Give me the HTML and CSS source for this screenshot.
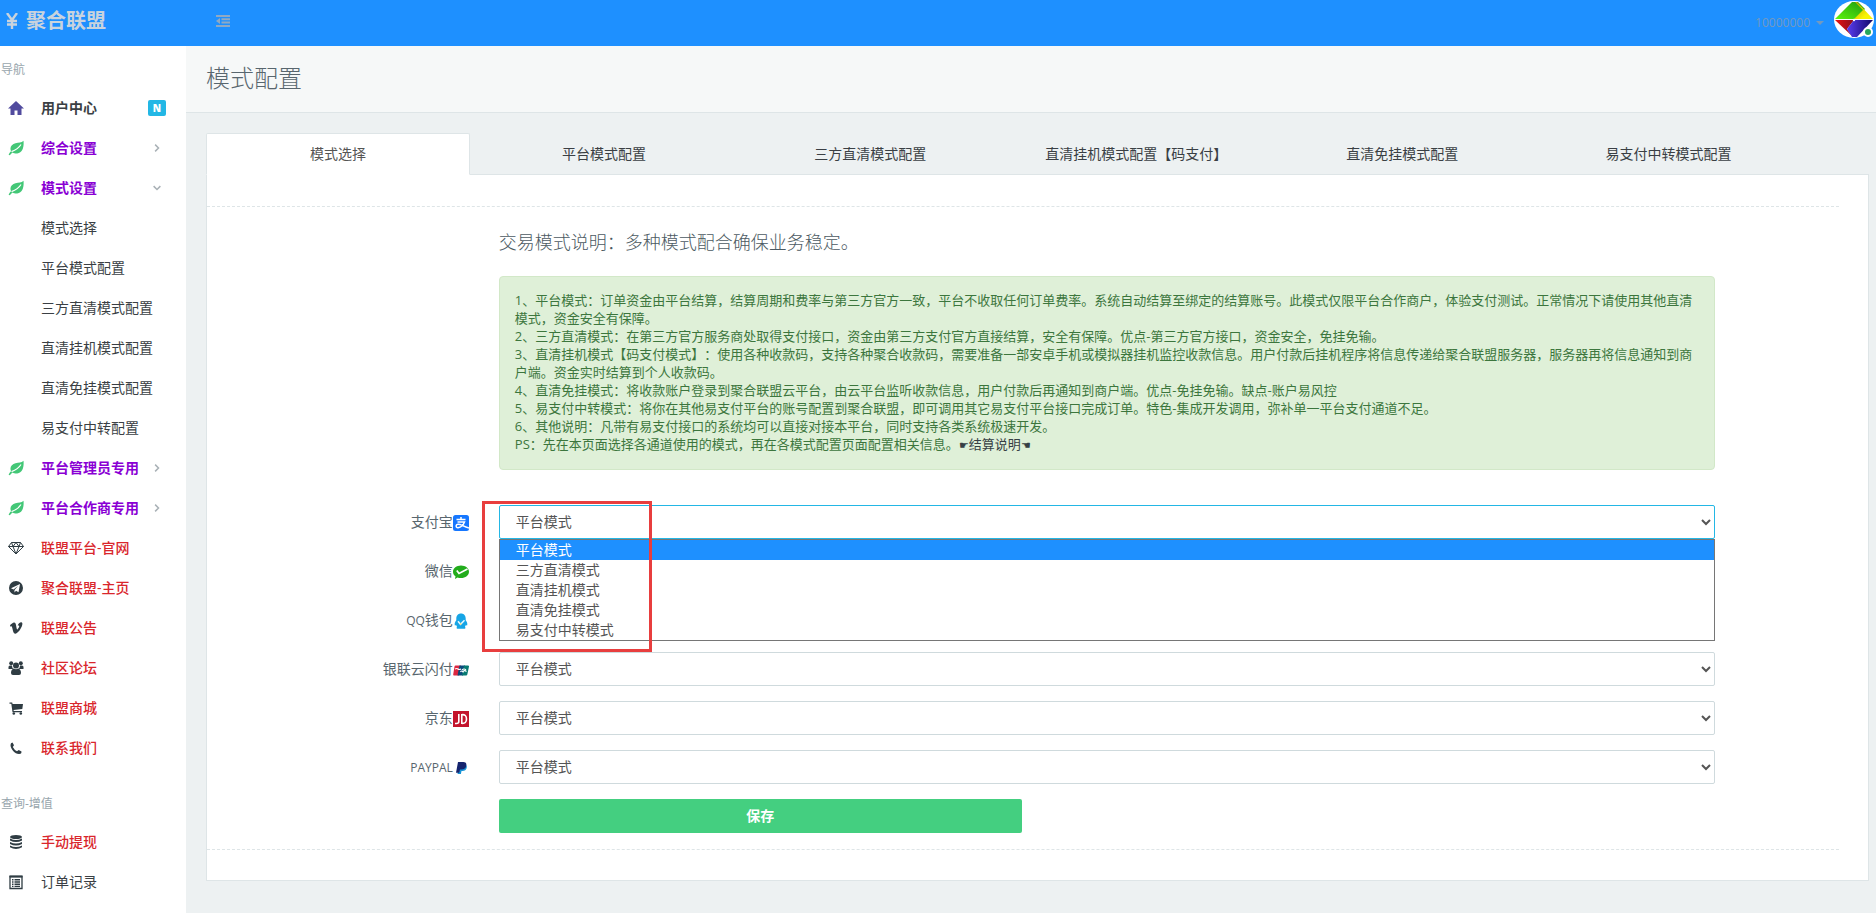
FILE: index.html
```html
<!DOCTYPE html>
<html lang="zh-CN">
<head>
<meta charset="utf-8">
<title>模式配置</title>
<link rel="stylesheet" href="styles.css">
</head>
<body>
<svg class="defs" aria-hidden="true">
  <symbol id="leaf" viewBox="0 0 16 16"><path d="M15.500.8c.6 5.500-.6 12.200-6.300 12.600-2 .1-3.500-.4-4.700-1-.9.700-1.700 1.800-2.700 2.900L.6 14.700c.7-1.600 1.400-2.600 2.400-3.500C1.300 7 3.800 4 7.500 3.200c3-.6 6-.3 8-2.400z"/><path d="M3.500 11.600C6.500 10.500 10.500 8.500 13 4.500" fill="none" stroke="#fff" stroke-width="1.200"/></symbol>
  <symbol id="right" viewBox="0 0 16 16"><path d="M5.500 3.500 10 8l-4.500 4.500" fill="none" stroke="currentColor" stroke-width="2"/></symbol>
  <symbol id="down" viewBox="0 0 16 16"><path d="M3.500 5.500 8 10l4.500-4.500" fill="none" stroke="currentColor" stroke-width="2"/></symbol>
</svg>
<header class="topbar">
  <a class="brand" href="#">
    <svg class="yen" viewBox="0 0 12 16"><path d="M1 0l5 7 5-7M6 7v9M1 8h10M1 11.500h10" fill="none" stroke="currentColor" stroke-width="2.400"/></svg>
    <span>聚合联盟</span>
  </a>
  <button class="toggle" type="button" aria-label="折叠菜单">
    <svg viewBox="0 0 14 12"><path d="M0 1h14M5.500 4.300H14M5.500 7.600H14M0 11h14" fill="none" stroke="currentColor" stroke-width="2"/><path d="M4 3v6L0 6z"/></svg>
  </button>
  <button class="user" type="button">
    <span>10000000</span><span class="caret"></span>
    <span class="avatar">
      <svg viewBox="0 0 40 38">
        <defs>
          <linearGradient id="g1" x1="0" y1="1" x2="1" y2="0"><stop offset="0" stop-color="#5cf60a"/><stop offset="1" stop-color="#1f9a12"/></linearGradient>
          <linearGradient id="g2" x1="0" y1="0" x2="1" y2="1"><stop offset="0" stop-color="#b8a000"/><stop offset=".7" stop-color="#f8f400"/></linearGradient>
          <linearGradient id="g3"><stop offset="0" stop-color="#e81010"/><stop offset="1" stop-color="#8a1020"/></linearGradient>
          <linearGradient id="g4"><stop offset="0" stop-color="#5a3cf0"/><stop offset="1" stop-color="#100868"/></linearGradient>
        </defs>
        <ellipse cx="20" cy="19.500" rx="20" ry="18.500" fill="#fff"/>
        <path d="M1 19 18 2h6l7 7-10 10z" fill="url(#g1)"/><path d="M23 2l16 17H20l9-9-8-8z" fill="url(#g2)"/>
        <path d="M1 20h19l-7 9 5 7z" fill="url(#g3)"/><path d="M20 20h19L23 37h-5l-5-8z" fill="url(#g4)"/><circle cx="20" cy="20" r="1.200" fill="#fff"/>
      </svg>
      <i class="online"></i>
    </span>
  </button>
</header>
<div class="shell">
  <nav class="side">
    <h2 class="side-title">导航</h2>
    <ul class="menu">
      <li><a class="home" href="#"><svg class="ico indigo" viewBox="0 0 16 16"><path d="M8 1 0 8.500h2.500V15h4v-4.500h3V15h4V8.500H16z"/></svg><span>用户中心</span><b class="badge">N</b></a></li>
      <li><a class="purple" href="#"><svg class="ico green"><use href="#leaf"/></svg><span>综合设置</span><svg class="arr"><use href="#right"/></svg></a></li>
      <li><a class="purple" href="#"><svg class="ico green"><use href="#leaf"/></svg><span>模式设置</span><svg class="arr"><use href="#down"/></svg></a>
        <ul class="menu sub">
          <li><a href="#">模式选择</a></li>
          <li><a href="#">平台模式配置</a></li>
          <li><a href="#">三方直清模式配置</a></li>
          <li><a href="#">直清挂机模式配置</a></li>
          <li><a href="#">直清免挂模式配置</a></li>
          <li><a href="#">易支付中转配置</a></li>
        </ul>
      </li>
      <li><a class="purple" href="#"><svg class="ico green"><use href="#leaf"/></svg><span>平台管理员专用</span><svg class="arr"><use href="#right"/></svg></a></li>
      <li><a class="purple" href="#"><svg class="ico green"><use href="#leaf"/></svg><span>平台合作商专用</span><svg class="arr"><use href="#right"/></svg></a></li>
      <li><a class="red" href="#"><svg class="ico" viewBox="0 0 16 16"><path d="M3.500 2.500h9l3 4L8 14 .5 6.500zM.5 6.500h15M5 6.500 8 14l3-7.500M3.500 2.500l1.500 4 3-4 3 4 1.500-4" fill="none" stroke="currentColor"/></svg><span>联盟平台-官网</span></a></li>
      <li><a class="red" href="#"><svg class="ico" viewBox="0 0 16 16"><path fill-rule="evenodd" d="M8 1a7 7 0 1 1 0 14A7 7 0 0 1 8 1zm4 3L3 8.200l2.500 1.200L10 6 6.500 10v2.500L8 10.800l2.500 1.400z"/></svg><span>聚合联盟-主页</span></a></li>
      <li><a class="red" href="#"><svg class="ico" viewBox="0 0 16 16"><path d="M2 5.200C3.200 4 5 2.500 6 2.400c1.300-.1 1.700 1 2 2.600.4 2.200.7 4.400 1.200 4.400.7 0 2.200-2.700 2-3.500-.2-.6-.9-.5-1.500-.2.500-2 2-3.400 3.500-3.400 1.300 0 1.400 1.400 1 2.800-.8 3.500-4.500 8.700-7 8.700-1.800 0-2-2.200-2.600-4.500-.4-1.600-.6-3-1.200-3-.2 0-.6.300-.9.500z"/></svg><span>联盟公告</span></a></li>
      <li><a class="red" href="#"><svg class="ico" viewBox="0 0 16 16"><circle cx="3.200" cy="3.200" r="2"/><circle cx="12.800" cy="3.200" r="2"/><circle cx="8" cy="5.500" r="3"/><path d="M.5 9V7q0-1.500 1.500-1.500h2Q4 8 5.500 9zM15.500 9V7q0-1.500-1.500-1.500h-2Q12 8 10.500 9zM3 13q0-4 3-4.500 2 1.500 4 0 3 .5 3 4.500 0 2-2 2H5q-2 0-2-2z"/></svg><span>社区论坛</span></a></li>
      <li><a class="red" href="#"><svg class="ico" viewBox="0 0 16 16"><path d="M1.500 2.500h2.700l.4 1.500H15l-.7 5-8.800 1 .3 1H14v1.300H4.500L3.300 3.800H1.500z"/><circle cx="5.800" cy="13.500" r="1.300"/><circle cx="12.800" cy="13.500" r="1.300"/></svg><span>联盟商城</span></a></li>
      <li><a class="red" href="#"><svg class="ico" viewBox="0 0 16 16"><path d="M4.500 2.500 6 5.300 4.800 7q1.500 3 4.200 4.200l1.700-1.200 2.800 1.500q.2 2.500-2.300 2.500C7 14.200 2.500 9 2.500 5q0-2.500 2-2.500z"/></svg><span>联系我们</span></a></li>
    </ul>
    <h2 class="side-title second">查询-增值</h2>
    <ul class="menu">
      <li><a class="red" href="#"><svg class="ico" viewBox="0 0 16 16"><ellipse cx="8" cy="3" rx="6" ry="2"/><path d="M2 4.500q6 3 12 0v2q-6 3-12 0zM2 8q6 3 12 0v2q-6 3-12 0zM2 11.500q6 3 12 0v1.800q-6 3.400-12 0z"/></svg><span>手动提现</span></a></li>
      <li><a class="plain" href="#"><svg class="ico" viewBox="0 0 16 16"><path d="M2 2.500h12v12H2z" fill="none" stroke="currentColor" stroke-width="1.300"/><path d="M1.500 1.500h13v2h-13zM4 5h1.500v1.400H4zM6.500 5H12v1.400H6.500zM4 7.300h1.500v1.400H4zM6.500 7.300H12v1.400H6.500zM4 9.600h1.500V11H4zM6.500 9.600H12V11H6.500zM4 11.800h1.500V13H4zM6.500 11.800H12V13H6.500z"/></svg><span>订单记录</span></a></li>
    </ul>
  </nav>
  <main class="main">
    <div class="heading"><h1>模式配置</h1></div>
    <div class="content">
      <ul class="tabs">
        <li><a class="active" href="#">模式选择</a></li>
        <li><a href="#">平台模式配置</a></li>
        <li><a href="#">三方直清模式配置</a></li>
        <li><a href="#">直清挂机模式配置【码支付】</a></li>
        <li><a href="#">直清免挂模式配置</a></li>
        <li><a href="#">易支付中转模式配置</a></li>
      </ul>
      <form class="panel">
        <hr class="dash">
        <div class="row intro">
          <div class="field">
            <h3>交易模式说明：多种模式配合确保业务稳定。</h3>
            <div class="alert">
              1、平台模式：订单资金由平台结算，结算周期和费率与第三方官方一致，平台不收取任何订单费率。系统自动结算至绑定的结算账号。此模式仅限平台合作商户，体验支付测试。正常情况下请使用其他直清模式，资金安全有保障。<br>
              2、三方直清模式：在第三方官方服务商处取得支付接口，资金由第三方支付官方直接结算，安全有保障。优点-第三方官方接口，资金安全，免挂免输。<br>
              3、直清挂机模式【码支付模式】：使用各种收款码，支持各种聚合收款码，需要准备一部安卓手机或模拟器挂机监控收款信息。用户付款后挂机程序将信息传递给聚合联盟服务器，服务器再将信息通知到商户端。资金实时结算到个人收款码。<br>
              4、直清免挂模式：将收款账户登录到聚合联盟云平台，由云平台监听收款信息，用户付款后再通知到商户端。优点-免挂免输。缺点-账户易风控<br>
              5、易支付中转模式：将你在其他易支付平台的账号配置到聚合联盟，即可调用其它易支付平台接口完成订单。特色-集成开发调用，弥补单一平台支付通道不足。<br>
              6、其他说明：凡带有易支付接口的系统均可以直接对接本平台，同时支持各类系统极速开发。<br>
              PS：先在本页面选择各通道使用的模式，再在各模式配置页面配置相关信息。<a href="#"><span class="hand">☛</span>结算说明<span class="hand">☚</span></a>
            </div>
          </div>
        </div>
        <div class="row">
          <label for="alipay">支付宝<svg class="pay" viewBox="0 0 16 16"><rect width="16" height="16" rx="2.500" fill="#1677ff"/><path d="M3.500 4.500h9M8 2v2.500M4.500 7h7Q9.500 12 5 12.800C2.500 12.800 2.500 9.200 5.200 9.200c3 0 5 2.300 10.800 3.800" fill="none" stroke="#fff" stroke-width="1.500"/></svg></label>
          <div class="field open">
            <select id="alipay" class="focus"><option>平台模式</option><option>三方直清模式</option><option>直清挂机模式</option><option>直清免挂模式</option><option>易支付中转模式</option></select>
            <ul class="list">
              <li class="on">平台模式</li>
              <li>三方直清模式</li>
              <li>直清挂机模式</li>
              <li>直清免挂模式</li>
              <li>易支付中转模式</li>
            </ul>
            <div class="mark"></div>
          </div>
        </div>
        <div class="row">
          <label for="wechat">微信<svg class="pay" viewBox="0 0 16 16"><path d="M8 1.500c4.500 0 8 2.800 8 6.200s-3.500 6.300-8 6.300q-2 0-3.500-.6L2 15l.5-2.700C1 11.200 0 9.700 0 7.700c0-3.400 3.500-6.200 8-6.200z" fill="#22ac1c"/><path d="M3.800 6.500 6 9.500 14.500 5" fill="none" stroke="#fff" stroke-width="1.700"/></svg></label>
          <div class="field"><select id="wechat"><option>平台模式</option></select></div>
        </div>
        <div class="row">
          <label for="qq"><span class="latin">QQ</span>钱包<svg class="pay" viewBox="0 0 16 16"><path d="M8 .5c3 0 4.700 2.200 4.700 5v1.700c1.300 1.500 2 3.300 1.500 5-.5.500-1 0-1.300-.5-.2 1-.6 1.500-1 2 1.300 1.500.5 2.100-1 2.100H5.300c-1.700 0-2.400-.8-1.200-2.100-.5-.5-.8-1-1-2-.3.600-.9 1-1.300.5-.5-1.700.2-3.500 1.500-5V5.500c0-2.800 1.700-5 4.700-5z" fill="#16a5e6"/><path d="m5 8.300 2.500 3 4-4" fill="none" stroke="#e8f8ff" stroke-width="1.500"/><path d="M7 10.300 9 11l-1.500.8z" fill="#f5c430"/></svg></label>
          <div class="field"><select id="qq"><option>平台模式</option></select></div>
        </div>
        <div class="row">
          <label for="union">银联云闪付<svg class="pay" viewBox="0 0 16 16"><path d="M2.500 3.500H8l-2 10H1q-1 0-.8-1l1.300-8q.2-1 1-1z" fill="#dc2740"/><path d="M6.500 3.500H12l-2 10H4.500z" fill="#0a4a7c"/><path d="M11 3.500h4q1.200 0 1 1l-1.700 8q-.2 1-1.200 1H9z" fill="#077a72"/><path d="M2 7q2-1 3 0t3 0M7.500 10q1-2 2.500 0 1-2.500 3.500-.5M9 8q2-2 4 0" fill="none" stroke="#fff" stroke-width="1.100"/></svg></label>
          <div class="field"><select id="union"><option>平台模式</option></select></div>
        </div>
        <div class="row">
          <label for="jd">京东<svg class="pay" viewBox="0 0 16 16"><path d="M0 0h16v16H0z" fill="#c3142d"/><path d="M5.800 3v7.500q0 2-2.300 2H2M8.800 3.700v8.600q4.700.5 4.700-4.300t-4.700-4.300z" fill="none" stroke="#fff" stroke-width="1.600"/></svg></label>
          <div class="field"><select id="jd"><option>平台模式</option></select></div>
        </div>
        <div class="row">
          <label for="paypal"><span class="latin">PAYPAL</span><svg class="pay wide" viewBox="0 0 16 16"><path d="M6.500 4.500h6q2 1 1.200 3.500-.9 3-4.200 3h-1l-.6 3H4.500z" fill="#1793d6"/><path d="M5 2h5.500q3.500.3 2.800 3.700Q12.500 9.500 8.500 9.500H7l-.8 3.300H3z" fill="#15246e"/></svg></label>
          <div class="field"><select id="paypal"><option>平台模式</option></select></div>
        </div>
        <div class="row">
          <div class="field save"><button type="button">保存</button></div>
        </div>
        <hr class="dash last">
      </form>
    </div>
  </main>
</div>
</body>
</html>
```
FILE: styles.css
```css
* { box-sizing: border-box; }
body {
  margin: 0;
  min-height: 100vh;
  display: flex;
  flex-direction: column;
  background: #edf1f2;
  color: #58666e;
  font: 14px/20px "Open Sans", "Noto Sans CJK SC", sans-serif;
  text-spacing-trim: space-all;
}
ul { list-style: none; margin: 0; padding: 0; }
h1, h2, h3 { margin: 0; font-weight: 300; }
a { color: inherit; text-decoration: none; }
button, select { font: inherit; }
svg { fill: currentColor; }
.defs { display: none; }

.topbar { display: flex; align-items: center; height: 46px; background: #1e90ff; color: #c9d3dd; }
.brand { display: flex; align-items: center; gap: 8px; width: 186px; padding: 0 0 4px 6px; font-size: 20px; font-weight: 700; }
.yen { width: 12px; height: 16px; }
.toggle, .user { border: 0; padding: 0; background: none; color: #8fa9c4; }
.toggle { margin-left: 30px; padding-bottom: 4px; }
.toggle svg { display: block; width: 14px; height: 12px; }
.user { display: flex; align-items: center; margin-left: auto; padding-right: 2px; font-size: 12px; color: #7399bf; }
.caret { margin: 0 10px 0 6px; border: 4px solid transparent; border-top-color: currentColor; border-bottom: 0; }
.avatar { position: relative; width: 40px; height: 46px; }
.avatar svg { display: block; width: 40px; height: 38px; }
.online { position: absolute; right: 1px; top: 27px; width: 10px; height: 10px; border: 2px solid #fff; border-radius: 50%; background: #27a85a; }

.shell { flex: 1; display: flex; }
.side { width: 186px; padding-top: 14px; background: #fff; }
.side-title { padding: 0 1px 8px; font-size: 12px; font-weight: 400; line-height: 20px; color: #98a6ad; }
.side-title.second { padding-top: 26px; }
.menu a { display: flex; align-items: center; height: 40px; padding: 0 20px 0 8px; color: #3a3f44; }
.menu .ico { width: 16px; height: 16px; margin-right: 17px; color: #2f3c43; }
.menu .ico.green { color: #43c777; }
.menu .ico.indigo { color: #514b9e; }
.menu a.home { font-weight: 700; }
.menu a.purple { font-weight: 700; color: #8a00d4; }
.menu a.red { font-weight: 500; color: #d9262c; }
.menu.sub a { padding-left: 41px; }
.arr { width: 12px; height: 12px; margin: 0 3px 0 auto; color: #a9b1b6; }
.home .badge { margin-left: auto; width: 18px; border-radius: 2px; background: #23b7e5; color: #fff; font-size: 10px; line-height: 16px; text-align: center; }

.main { flex: 1; min-width: 0; }
.heading { padding: 14px 20px 16px; border-bottom: 1px solid #dee5e7; background: #f6f8f8; }
h1 { font-size: 24px; line-height: 36px; color: #58666e; }
.content { padding: 20px 7px 32px 20px; }
.tabs { display: flex; position: relative; margin-bottom: -1px; }
.tabs li { width: 16%; padding-right: 2px; }
.tabs a { display: block; height: 42px; padding: 10px 15px; border: 1px solid transparent; border-radius: 2px 2px 0 0; text-align: center; line-height: 20px; color: #3a3f44; }
.tabs a.active { border-color: #dee5e7; border-bottom-color: #fff; background: #fff; color: #555; }
.panel { padding-bottom: 30px; border: 1px solid #dee5e7; background: #fff; }
.dash { margin: 31px 29px 23px 0; border: 0; border-top: 1px dashed #dee5e7; }
.dash.last { margin: 16px 29px 0 0; }
.row { display: grid; grid-template-columns: 2fr 9fr 1fr; margin-bottom: 15px; }
.row label { padding: 7px 15px 0; text-align: right; }
.latin { font-size: 12px; }
.pay { width: 16px; height: 16px; vertical-align: -4px; }
.field { grid-column: 2; min-width: 0; padding: 0 15px; }
.row.intro { margin-bottom: 35px; }
h3 { margin-bottom: 22px; font-size: 18px; line-height: 24px; color: #4c5a62; }
.alert { padding: 14px 15px 16px; border: 1px solid #d2e8c8; border-radius: 4px; background: #dff0d8; color: #3c763d; font-size: 13px; line-height: 18px; }
.alert a { color: #363f44; }
.hand { font-size: 11px; line-height: 1; }
select { display: block; width: 100%; height: 34px; padding: 5px 12px 7px; border: 1px solid #cfdadd; border-radius: 2px; background: #fff; color: #555; }
select.focus { border-color: #23b7e5; outline: 0; }
.open { position: relative; }
.list { position: absolute; z-index: 1; top: 34px; left: 15px; right: 15px; border: 1px solid #767676; background: #fff; color: #555; }
.list li { padding-left: 16px; }
.list .on { background: #1e90ff; color: #fff; }
.mark { position: absolute; z-index: 2; top: -4px; left: -2px; width: 170px; height: 151px; border: 3px solid #e83e3e; }
.save button { width: 43%; height: 34px; border: 0; border-radius: 2px; background: #44cf80; color: #fff; font-weight: 700; }
```
